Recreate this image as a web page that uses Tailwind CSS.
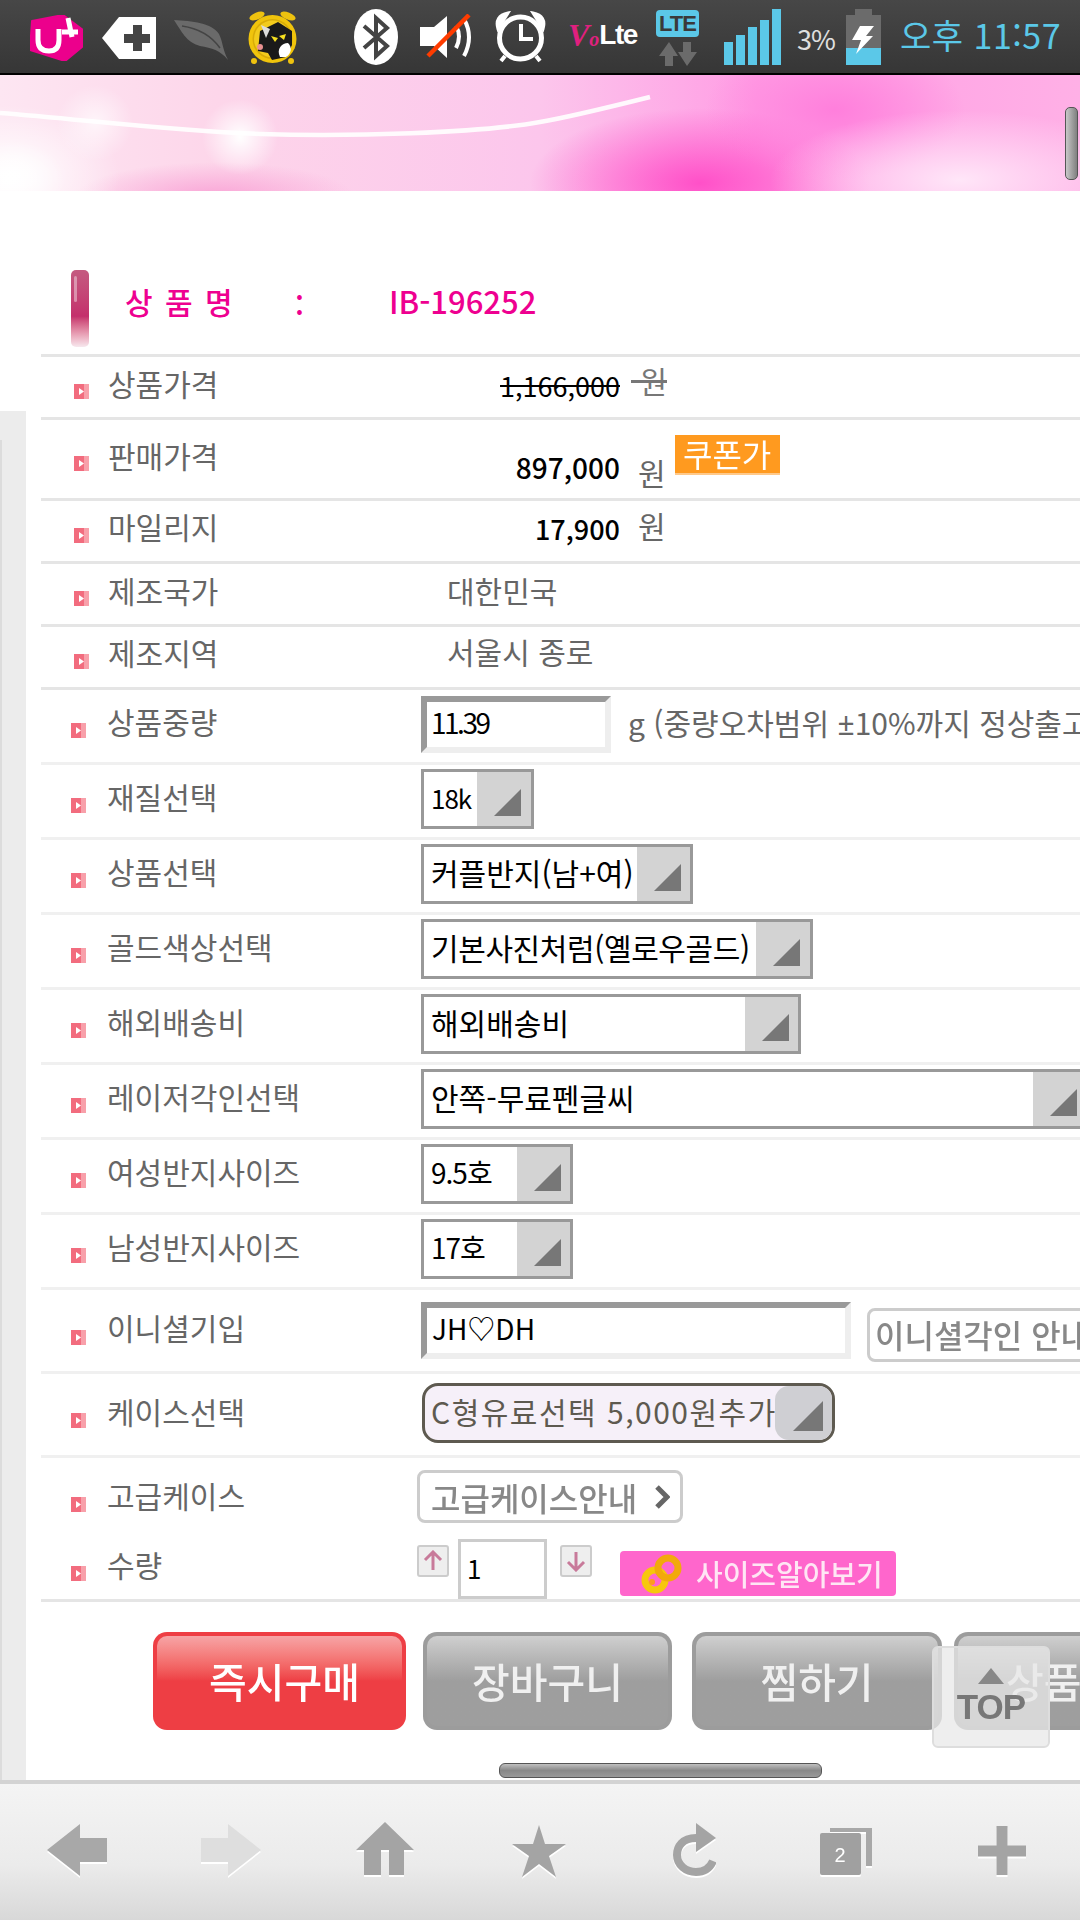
<!DOCTYPE html>
<html lang="ko">
<head>
    <meta charset="UTF-8">
    <meta name="viewport" content="width=device-width, initial-scale=1.0">
    <title>상품 상세</title>
    <script src="https://cdn.jsdelivr.net/npm/@tailwindcss/browser@4"></script>
</head>
<body class="bg-white">
<div class="relative flex flex-col w-[1080px] h-[1920px] overflow-hidden bg-white font-['Noto_Sans_CJK_KR','Noto_Sans',sans-serif]">

    <!-- status bar -->
    <div class="flex items-start shrink-0 h-[75px] border-b-2 border-black bg-linear-to-b from-[#474747] to-[#363636]">
        <svg class="ml-[30px] mt-[15px] shrink-0" width="53" height="46" viewBox="0 0 53 46">
            <path d="M2 6 L33 0 L53 15 L52 32 L35 46 L0 35 Z" fill="#ec008c" stroke="#ec008c" stroke-width="2" stroke-linejoin="round"/>
            <path d="M8 14 V25 Q8 36 19 36 Q29 36 29 25 V14 M38 3 L42 22 M32 17 H48" fill="none" stroke="#fff" stroke-width="5"/>
        </svg>
        <svg class="ml-[19px] mt-[17px] shrink-0" width="54" height="42" viewBox="0 0 54 42">
            <path d="M0 21 L17 0 H54 V42 H17 Z" fill="#fff"/>
            <path d="M31 8 H40 V17 H48 V26 H40 V34 H31 V26 H22 V17 H31 Z" fill="#444"/>
        </svg>
        <svg class="ml-[18px] mt-[20px] shrink-0" width="54" height="40" viewBox="0 0 54 40">
            <path d="M0 0 C18 1 38 3 45 14 C49 22 48 28 54 40 C46 30 38 28 26 26 C12 22 8 12 0 0 Z" fill="#6a6a6a"/>
            <path d="M8 6 C22 8 36 14 46 28" fill="none" stroke="#444" stroke-width="1.5"/>
        </svg>
        <svg class="ml-[20px] mt-[11px] shrink-0" width="49" height="54" viewBox="0 0 49 54">
            <ellipse cx="9" cy="5" rx="8" ry="3.5" transform="rotate(-22 9 5)" fill="#eec20f"/>
            <ellipse cx="40" cy="5" rx="8" ry="3.5" transform="rotate(22 40 5)" fill="#eec20f"/>
            <circle cx="6" cy="50" r="3" fill="#eec20f"/>
            <circle cx="43" cy="50" r="3" fill="#eec20f"/>
            <circle cx="24.5" cy="28" r="24" fill="#f0c40c"/>
            <circle cx="24.5" cy="28" r="20" fill="#d8ac08"/>
            <circle cx="24.5" cy="28" r="18.5" fill="#f2cb1c"/>
            <path d="M12 20 L30 11 L44 20 L44 34 L38 46 L24 49 L20 42 L10 40 Z" fill="#1a1a1a"/>
            <path d="M13 14 L22 18 L18 27 Z" fill="#ddd"/>
            <path d="M23 25 L30 27 L27 31 Z M31 25 L38 23 L36 29 Z" fill="#f6e020"/>
            <path d="M32 46 C28 38 34 32 40 32 C44 36 44 42 38 46 Z" fill="#fff"/>
            <circle cx="12" cy="36" r="3" fill="#e89090"/>
        </svg>
        <svg class="ml-[57px] mt-[9px] shrink-0" width="44" height="56" viewBox="0 0 44 56">
            <ellipse cx="22" cy="28" rx="22" ry="28" fill="#fff"/>
            <path d="M10 17 L33 37 L22 47 V9 L33 19 L10 39" fill="none" stroke="#444" stroke-width="4"/>
        </svg>
        <svg class="ml-[22px] mt-[14px] shrink-0" width="55" height="46" viewBox="0 0 55 46">
            <path d="M0 13 H14 L27 2 V44 L14 32 H0 Z" fill="#fff"/>
            <path d="M36 12 Q42 22 36 34 M44 5 Q54 23 44 42" fill="none" stroke="#fff" stroke-width="4"/>
            <path d="M8 42 L49 1" stroke="#ff3c00" stroke-width="4.5"/>
        </svg>
        <svg class="ml-[18px] mt-[11px] shrink-0" width="55" height="52" viewBox="0 0 55 52">
            <circle cx="27.5" cy="27" r="21" fill="none" stroke="#fff" stroke-width="5"/>
            <path d="M5 18 Q1 5 15 2 Q10 10 5 18 Z M50 18 Q54 5 40 2 Q45 10 50 18 Z" fill="#fff" stroke="#fff" stroke-width="3"/>
            <path d="M28 13 V28 H40" fill="none" stroke="#fff" stroke-width="4"/>
            <path d="M12 45 L8 50 M43 45 L47 50" stroke="#fff" stroke-width="4"/>
        </svg>
        <div class="ml-[20px] mt-[13px] w-[69px] flex items-center shrink-0 h-[44px] whitespace-nowrap">
            <span class="font-['Liberation_Serif',serif] italic font-bold text-[#e0207f] text-[32px] leading-none">V<span class="text-[20px]">o</span></span>
            <span class="font-['Liberation_Sans',sans-serif] font-bold text-white text-[28px] tracking-[-1.5px] leading-none">Lte</span>
        </div>
        <div class="ml-[19px] mt-[10px] w-[43px] shrink-0 flex flex-col items-center">
            <span class="w-[43px] h-[27px] rounded-[4px] bg-[#5bc8e8] text-[#3a3a3a] font-['Liberation_Sans',sans-serif] font-bold text-[22px] leading-[27px] text-center tracking-[-1px]">LTE</span>
            <svg class="mt-[5px]" width="38" height="24" viewBox="0 0 38 24">
                <path d="M0 14 L10 0 L19 14 H14 V24 H6 V14 Z M19 10 H24 V0 H32 V10 H38 L28 24 Z" fill="#6b6b6b"/>
            </svg>
        </div>
        <div class="ml-[25px] mt-[9px] h-[56px] flex items-end gap-[3px] shrink-0">
            <span class="w-[9px] h-[23px] bg-[#5bc8e8]"></span>
            <span class="w-[9px] h-[30px] bg-[#5bc8e8]"></span>
            <span class="w-[9px] h-[38px] bg-[#5bc8e8]"></span>
            <span class="w-[9px] h-[45px] bg-[#5bc8e8]"></span>
            <span class="w-[9px] h-[56px] bg-[#5bc8e8]"></span>
        </div>
        <span class="ml-[16px] mt-[19px] w-[36px] shrink-0 text-[#e0e0e0] text-[27px] leading-[40px] tracking-[-1px] whitespace-nowrap">3%</span>
        <div class="relative ml-[13px] mt-[9px] w-[35px] h-[56px] shrink-0 flex flex-col items-center">
            <span class="w-[17px] h-[6px] bg-[#6b6b6b]"></span>
            <span class="w-[35px] h-[33px] bg-[#6b6b6b]"></span>
            <span class="w-[35px] h-[17px] bg-[#5bc8e8]"></span>
            <svg class="absolute left-[6px] top-[17px]" width="22" height="28" viewBox="0 0 22 28">
                <path d="M8 0 H22 L14 10 H21 L4 28 L9 14 H0 Z" fill="#fff"/>
            </svg>
        </div>
        <span class="ml-[19px] mt-[10px] shrink-0 text-[#5bc8e8] text-[34px] tracking-[0.5px] leading-[50px] whitespace-nowrap">오후 11:57</span>
    </div>

    <!-- banner -->
    <svg class="block shrink-0" width="1080" height="116" viewBox="0 0 1080 116">
        <defs>
            <linearGradient id="base" x1="0" y1="0" x2="1" y2="0">
                <stop offset="0" stop-color="#fde6f2"/>
                <stop offset="0.2" stop-color="#fdd6ea"/>
                <stop offset="0.5" stop-color="#fcc6ec"/>
                <stop offset="0.7" stop-color="#ff9de4"/>
                <stop offset="1" stop-color="#ffb0e6"/>
            </linearGradient>
            <radialGradient id="hot"><stop offset="0" stop-color="#ff50c8"/><stop offset="1" stop-color="#ff50c8" stop-opacity="0"/></radialGradient>
            <radialGradient id="mid"><stop offset="0" stop-color="#ff7fdc"/><stop offset="1" stop-color="#ff7fdc" stop-opacity="0"/></radialGradient>
            <radialGradient id="soft"><stop offset="0" stop-color="#f9a4d6"/><stop offset="1" stop-color="#f9a4d6" stop-opacity="0"/></radialGradient>
            <radialGradient id="glow"><stop offset="0" stop-color="#fff"/><stop offset="1" stop-color="#fff" stop-opacity="0"/></radialGradient>
            <radialGradient id="pale"><stop offset="0" stop-color="#ffe6f8"/><stop offset="1" stop-color="#ffe6f8" stop-opacity="0"/></radialGradient>
        </defs>
        <rect width="1080" height="116" fill="url(#base)"/>
        <ellipse cx="700" cy="108" rx="170" ry="75" fill="url(#hot)"/>
        <ellipse cx="835" cy="35" rx="130" ry="70" fill="url(#mid)"/>
        <ellipse cx="215" cy="122" rx="140" ry="35" fill="url(#soft)"/>
        <ellipse cx="960" cy="105" rx="190" ry="70" fill="url(#pale)"/>
        <ellipse cx="10" cy="100" rx="110" ry="70" fill="url(#glow)"/>
        <ellipse cx="10" cy="105" rx="55" ry="40" fill="url(#glow)"/>
        <circle cx="240" cy="62" r="38" fill="url(#glow)"/>
        <circle cx="95" cy="48" r="38" fill="url(#glow)" opacity="0.7"/>
        <path d="M0 38 C80 44 170 56 260 59 C350 62 480 58 540 47 C570 42 610 32 650 22" fill="none" stroke="#fff" stroke-width="4.5" opacity="0.9"/>
    </svg>

    <!-- page body -->
    <div class="flex flex-1 min-h-0 overflow-hidden">
        <div class="w-[26px] shrink-0 pt-[220px] flex flex-col">
            <div class="flex-1 bg-[#ececec] pt-[29px]">
                <div class="h-full w-[2px] bg-[#dcdcdc]"></div>
            </div>
        </div>

        <div class="flex-1 min-w-0 pl-[15px] overflow-hidden whitespace-nowrap">
            <!-- product name -->
            <div class="flex items-start h-[166px] border-b-[3px] border-[#e5e5e5]">
                <div class="ml-[30px] mt-[79px] w-[18px] h-[77px] shrink-0 pl-[3px] pt-[6px] rounded-[5px] bg-linear-to-b from-[#c45a80] via-[#c42f6c] via-[60%] to-[#f6e8ee]">
                    <div class="w-[3px] h-[26px] rounded-[2px] bg-white/40"></div>
                </div>
                <span class="ml-[36px] mt-[90px] w-[170px] shrink-0 text-[#ee0090] text-[30px] leading-[40px] font-medium tracking-[2px]">상 품 명</span>
                <span class="mt-[93px] w-[94px] shrink-0 text-[#ee0090] text-[30px] leading-[40px] font-medium">:</span>
                <span class="mt-[90px] text-[#ee0090] text-[31px] leading-[40px] font-medium">IB-196252</span>
            </div>

            <!-- 상품가격 -->
            <div class="flex items-start h-[63px] border-b-[3px] border-[#e5e5e5]">
                <svg class="ml-[33px] mt-[27px] shrink-0" width="15" height="15" viewBox="0 0 15 15"><rect width="10" height="15" fill="#f26c7e"/><rect x="10" width="5" height="15" fill="#f8a0aa"/><path d="M5 4 L10 7.5 L5 11 Z" fill="#fff"/></svg>
                <span class="ml-[19px] mt-[6px] w-[313px] shrink-0 text-[#666] text-[30px] leading-[40px]">상품가격</span>
                <span class="mt-[9px] w-[199px] shrink-0 text-right text-black text-[27px] leading-[40px] line-through">1,166,000</span>
                <span class="ml-[11px] mt-[3px] text-[#777] text-[30px] leading-[40px] line-through">&nbsp;원</span>
            </div>

            <!-- 판매가격 -->
            <div class="flex items-start h-[81px] border-b-[3px] border-[#e5e5e5]">
                <svg class="ml-[33px] mt-[36px] shrink-0" width="15" height="15" viewBox="0 0 15 15"><rect width="10" height="15" fill="#f26c7e"/><rect x="10" width="5" height="15" fill="#f8a0aa"/><path d="M5 4 L10 7.5 L5 11 Z" fill="#fff"/></svg>
                <span class="ml-[19px] mt-[15px] w-[313px] shrink-0 text-[#666] text-[30px] leading-[40px]">판매가격</span>
                <span class="mt-[27px] w-[199px] shrink-0 text-right text-black text-[28px] leading-[40px] font-medium">897,000</span>
                <span class="ml-[18px] mt-[32px] text-[#666] text-[30px] leading-[40px]">원</span>
                <span class="ml-[9px] mt-[15px] w-[105px] h-[40px] shrink-0 bg-[#ff9a1f] border-b-2 border-[#ffc98a] text-white text-center text-[32px] leading-[36px] blur-[0.4px]">쿠폰가</span>
            </div>

            <!-- 마일리지 -->
            <div class="flex items-start h-[63px] border-b-[3px] border-[#e5e5e5]">
                <svg class="ml-[33px] mt-[27px] shrink-0" width="15" height="15" viewBox="0 0 15 15"><rect width="10" height="15" fill="#f26c7e"/><rect x="10" width="5" height="15" fill="#f8a0aa"/><path d="M5 4 L10 7.5 L5 11 Z" fill="#fff"/></svg>
                <span class="ml-[19px] mt-[5px] w-[313px] shrink-0 text-[#666] text-[30px] leading-[40px]">마일리지</span>
                <span class="mt-[8px] w-[199px] shrink-0 text-right text-black text-[27px] leading-[40px] font-medium">17,900</span>
                <span class="ml-[18px] mt-[4px] text-[#666] text-[30px] leading-[40px]">원</span>
            </div>

            <!-- 제조국가 -->
            <div class="flex items-start h-[63px] border-b-[3px] border-[#e5e5e5]">
                <svg class="ml-[33px] mt-[27px] shrink-0" width="15" height="15" viewBox="0 0 15 15"><rect width="10" height="15" fill="#f26c7e"/><rect x="10" width="5" height="15" fill="#f8a0aa"/><path d="M5 4 L10 7.5 L5 11 Z" fill="#fff"/></svg>
                <span class="ml-[19px] mt-[6px] w-[313px] shrink-0 text-[#666] text-[30px] leading-[40px]">제조국가</span>
                <span class="ml-[26px] mt-[6px] text-[#666] text-[30px] leading-[40px]">대한민국</span>
            </div>

            <!-- 제조지역 -->
            <div class="flex items-start h-[63px] border-b-[3px] border-[#e5e5e5]">
                <svg class="ml-[33px] mt-[27px] shrink-0" width="15" height="15" viewBox="0 0 15 15"><rect width="10" height="15" fill="#f26c7e"/><rect x="10" width="5" height="15" fill="#f8a0aa"/><path d="M5 4 L10 7.5 L5 11 Z" fill="#fff"/></svg>
                <span class="ml-[19px] mt-[5px] w-[313px] shrink-0 text-[#666] text-[30px] leading-[40px]">제조지역</span>
                <span class="ml-[26px] mt-[4px] text-[#666] text-[30px] leading-[40px]">서울시 종로</span>
            </div>

            <!-- 상품중량 -->
            <div class="flex items-start h-[75px] border-b-[3px] border-[#f0f0f0]">
                <svg class="ml-[30px] mt-[33px] shrink-0" width="15" height="15" viewBox="0 0 15 15"><rect width="10" height="15" fill="#f26c7e"/><rect x="10" width="5" height="15" fill="#f8a0aa"/><path d="M5 4 L10 7.5 L5 11 Z" fill="#fff"/></svg>
                <span class="ml-[21px] mt-[11px] w-[314px] shrink-0 text-[#666] text-[30px] leading-[40px]">상품중량</span>
                <div class="mt-[6px] w-[190px] h-[57px] shrink-0 border-[6px] border-t-[#999] border-l-[#999] border-r-[#eee] border-b-[#eee] pl-[4px] text-black text-[28px] tracking-[-2.5px] leading-[40px]">11.39</div>
                <span class="ml-[17px] mt-[12px] text-[#666] text-[30px] leading-[40px]">g (중량오차범위 <span class="font-['Noto_Sans',sans-serif]">±</span>10%까지 정상출고</span>
            </div>

            <!-- 재질선택 -->
            <div class="flex items-start h-[75px] border-b-[3px] border-[#f0f0f0]">
                <svg class="ml-[30px] mt-[33px] shrink-0" width="15" height="15" viewBox="0 0 15 15"><rect width="10" height="15" fill="#f26c7e"/><rect x="10" width="5" height="15" fill="#f8a0aa"/><path d="M5 4 L10 7.5 L5 11 Z" fill="#fff"/></svg>
                <span class="ml-[21px] mt-[11px] w-[314px] shrink-0 text-[#666] text-[30px] leading-[40px]">재질선택</span>
                <div class="flex mt-[4px] w-[113px] h-[60px] shrink-0 border-[3px] border-[#999] bg-white">
                    <span class="flex-1 min-w-0 pl-[7px] text-black text-[26px] tracking-[-1px] leading-[52px]">18k</span>
                    <span class="flex items-end w-[54px] h-full pl-[17px] pb-[10px] bg-[#d3d3d3]"><svg width="27" height="27" viewBox="0 0 27 27"><path d="M27 0 V27 H0 Z" fill="#777"/></svg></span>
                </div>
            </div>

            <!-- 상품선택 -->
            <div class="flex items-start h-[75px] border-b-[3px] border-[#f0f0f0]">
                <svg class="ml-[30px] mt-[33px] shrink-0" width="15" height="15" viewBox="0 0 15 15"><rect width="10" height="15" fill="#f26c7e"/><rect x="10" width="5" height="15" fill="#f8a0aa"/><path d="M5 4 L10 7.5 L5 11 Z" fill="#fff"/></svg>
                <span class="ml-[21px] mt-[11px] w-[314px] shrink-0 text-[#666] text-[30px] leading-[40px]">상품선택</span>
                <div class="flex mt-[4px] w-[272px] h-[60px] shrink-0 border-[3px] border-[#999] bg-white">
                    <span class="flex-1 min-w-0 pl-[7px] text-black text-[30px] leading-[50px]">커플반지(남+여)</span>
                    <span class="flex items-end w-[53px] h-full pl-[17px] pb-[10px] bg-[#d3d3d3]"><svg width="27" height="27" viewBox="0 0 27 27"><path d="M27 0 V27 H0 Z" fill="#777"/></svg></span>
                </div>
            </div>

            <!-- 골드색상선택 -->
            <div class="flex items-start h-[75px] border-b-[3px] border-[#f0f0f0]">
                <svg class="ml-[30px] mt-[33px] shrink-0" width="15" height="15" viewBox="0 0 15 15"><rect width="10" height="15" fill="#f26c7e"/><rect x="10" width="5" height="15" fill="#f8a0aa"/><path d="M5 4 L10 7.5 L5 11 Z" fill="#fff"/></svg>
                <span class="ml-[21px] mt-[11px] w-[314px] shrink-0 text-[#666] text-[30px] leading-[40px]">골드색상선택</span>
                <div class="flex mt-[4px] w-[392px] h-[60px] shrink-0 border-[3px] border-[#999] bg-white">
                    <span class="flex-1 min-w-0 pl-[7px] text-black text-[30px] tracking-[-0.4px] leading-[50px]">기본사진처럼(옐로우골드)</span>
                    <span class="flex items-end w-[54px] h-full pl-[17px] pb-[10px] bg-[#d3d3d3]"><svg width="27" height="27" viewBox="0 0 27 27"><path d="M27 0 V27 H0 Z" fill="#777"/></svg></span>
                </div>
            </div>

            <!-- 해외배송비 -->
            <div class="flex items-start h-[75px] border-b-[3px] border-[#f0f0f0]">
                <svg class="ml-[30px] mt-[33px] shrink-0" width="15" height="15" viewBox="0 0 15 15"><rect width="10" height="15" fill="#f26c7e"/><rect x="10" width="5" height="15" fill="#f8a0aa"/><path d="M5 4 L10 7.5 L5 11 Z" fill="#fff"/></svg>
                <span class="ml-[21px] mt-[11px] w-[314px] shrink-0 text-[#666] text-[30px] leading-[40px]">해외배송비</span>
                <div class="flex mt-[4px] w-[380px] h-[60px] shrink-0 border-[3px] border-[#999] bg-white">
                    <span class="flex-1 min-w-0 pl-[7px] text-black text-[30px] leading-[50px]">해외배송비</span>
                    <span class="flex items-end w-[53px] h-full pl-[17px] pb-[10px] bg-[#d3d3d3]"><svg width="27" height="27" viewBox="0 0 27 27"><path d="M27 0 V27 H0 Z" fill="#777"/></svg></span>
                </div>
            </div>

            <!-- 레이저각인선택 -->
            <div class="flex items-start h-[75px] border-b-[3px] border-[#f0f0f0]">
                <svg class="ml-[30px] mt-[33px] shrink-0" width="15" height="15" viewBox="0 0 15 15"><rect width="10" height="15" fill="#f26c7e"/><rect x="10" width="5" height="15" fill="#f8a0aa"/><path d="M5 4 L10 7.5 L5 11 Z" fill="#fff"/></svg>
                <span class="ml-[21px] mt-[11px] w-[314px] shrink-0 text-[#666] text-[30px] leading-[40px]">레이저각인선택</span>
                <div class="flex mt-[4px] w-[674px] h-[60px] shrink-0 border-[3px] border-[#999] bg-white">
                    <span class="flex-1 min-w-0 pl-[7px] text-black text-[30px] leading-[50px]">안쪽-무료펜글씨</span>
                    <span class="flex items-end w-[59px] h-full pl-[17px] pb-[10px] bg-[#d3d3d3]"><svg width="27" height="27" viewBox="0 0 27 27"><path d="M27 0 V27 H0 Z" fill="#777"/></svg></span>
                </div>
            </div>

            <!-- 여성반지사이즈 -->
            <div class="flex items-start h-[75px] border-b-[3px] border-[#f0f0f0]">
                <svg class="ml-[30px] mt-[33px] shrink-0" width="15" height="15" viewBox="0 0 15 15"><rect width="10" height="15" fill="#f26c7e"/><rect x="10" width="5" height="15" fill="#f8a0aa"/><path d="M5 4 L10 7.5 L5 11 Z" fill="#fff"/></svg>
                <span class="ml-[21px] mt-[11px] w-[314px] shrink-0 text-[#666] text-[30px] leading-[40px]">여성반지사이즈</span>
                <div class="flex mt-[4px] w-[152px] h-[60px] shrink-0 border-[3px] border-[#999] bg-white">
                    <span class="flex-1 min-w-0 pl-[7px] text-black text-[28px] tracking-[-1px] leading-[50px]">9.5호</span>
                    <span class="flex items-end w-[53px] h-full pl-[17px] pb-[10px] bg-[#d3d3d3]"><svg width="27" height="27" viewBox="0 0 27 27"><path d="M27 0 V27 H0 Z" fill="#777"/></svg></span>
                </div>
            </div>

            <!-- 남성반지사이즈 -->
            <div class="flex items-start h-[75px] border-b-[3px] border-[#f0f0f0]">
                <svg class="ml-[30px] mt-[33px] shrink-0" width="15" height="15" viewBox="0 0 15 15"><rect width="10" height="15" fill="#f26c7e"/><rect x="10" width="5" height="15" fill="#f8a0aa"/><path d="M5 4 L10 7.5 L5 11 Z" fill="#fff"/></svg>
                <span class="ml-[21px] mt-[11px] w-[314px] shrink-0 text-[#666] text-[30px] leading-[40px]">남성반지사이즈</span>
                <div class="flex mt-[4px] w-[152px] h-[60px] shrink-0 border-[3px] border-[#999] bg-white">
                    <span class="flex-1 min-w-0 pl-[7px] text-black text-[28px] tracking-[-1px] leading-[50px]">17호</span>
                    <span class="flex items-end w-[53px] h-full pl-[17px] pb-[10px] bg-[#d3d3d3]"><svg width="27" height="27" viewBox="0 0 27 27"><path d="M27 0 V27 H0 Z" fill="#777"/></svg></span>
                </div>
            </div>

            <!-- 이니셜기입 -->
            <div class="flex items-start h-[84px] border-b-[3px] border-[#f0f0f0]">
                <svg class="ml-[30px] mt-[40px] shrink-0" width="15" height="15" viewBox="0 0 15 15"><rect width="10" height="15" fill="#f26c7e"/><rect x="10" width="5" height="15" fill="#f8a0aa"/><path d="M5 4 L10 7.5 L5 11 Z" fill="#fff"/></svg>
                <span class="ml-[21px] mt-[17px] w-[314px] shrink-0 text-[#666] text-[30px] leading-[40px]">이니셜기입</span>
                <div class="mt-[12px] w-[430px] h-[57px] shrink-0 border-[6px] border-t-[#999] border-l-[#999] border-r-[#eee] border-b-[#eee] pl-[5px] text-black text-[28px] leading-[40px]">JH♡DH</div>
                <div class="ml-[16px] mt-[18px] w-[260px] h-[54px] shrink-0 pl-[5px] border-[3px] border-[#ccc] rounded-[8px] text-[#888] font-medium text-[32px] leading-[46px] blur-[0.5px]">이니셜각인 안내</div>
            </div>

            <!-- 케이스선택 -->
            <div class="flex items-start h-[84px] border-b-[3px] border-[#f0f0f0]">
                <svg class="ml-[30px] mt-[39px] shrink-0" width="15" height="15" viewBox="0 0 15 15"><rect width="10" height="15" fill="#f26c7e"/><rect x="10" width="5" height="15" fill="#f8a0aa"/><path d="M5 4 L10 7.5 L5 11 Z" fill="#fff"/></svg>
                <span class="ml-[21px] mt-[17px] w-[315px] shrink-0 text-[#666] text-[30px] leading-[40px]">케이스선택</span>
                <div class="flex mt-[9px] w-[413px] h-[60px] shrink-0 overflow-hidden border-[3px] border-[#5e5a50] rounded-[16px] bg-[#f6f0f9]">
                    <span class="flex-1 min-w-0 pl-[6px] text-[#5e5a50] text-[30px] tracking-[1.5px] leading-[50px]">C형유료선택 5,000원추가</span>
                    <span class="flex items-end w-[57px] h-full pl-[18px] pb-[9px] rounded-l-[14px] bg-[#cfcfd3]"><svg width="30" height="30" viewBox="0 0 30 30"><path d="M30 0 V30 H0 Z" fill="#777"/></svg></span>
                </div>
            </div>

            <!-- 고급케이스 -->
            <div class="flex items-start h-[81px]">
                <svg class="ml-[30px] mt-[39px] shrink-0" width="15" height="15" viewBox="0 0 15 15"><rect width="10" height="15" fill="#f26c7e"/><rect x="10" width="5" height="15" fill="#f8a0aa"/><path d="M5 4 L10 7.5 L5 11 Z" fill="#fff"/></svg>
                <span class="ml-[21px] mt-[17px] w-[310px] shrink-0 text-[#666] text-[30px] leading-[40px]">고급케이스</span>
                <div class="flex items-center mt-[12px] w-[266px] h-[53px] shrink-0 pl-[11px] border-[3px] border-[#ccc] rounded-[8px] bg-white">
                    <span class="text-[#888] font-medium text-[32px] leading-[46px] blur-[0.5px]">고급케이스안내</span>
                    <svg class="ml-[18px] blur-[0.5px]" width="15" height="24" viewBox="0 0 15 24"><path d="M2 2 L12 12 L2 22" fill="none" stroke="#666" stroke-width="5"/></svg>
                </div>
            </div>

            <!-- 수량 -->
            <div class="flex items-start h-[63px] border-b-[3px] border-[#e5e5e5]">
                <svg class="ml-[30px] mt-[27px] shrink-0" width="15" height="15" viewBox="0 0 15 15"><rect width="10" height="15" fill="#f26c7e"/><rect x="10" width="5" height="15" fill="#f8a0aa"/><path d="M5 4 L10 7.5 L5 11 Z" fill="#fff"/></svg>
                <span class="ml-[21px] mt-[5px] w-[310px] shrink-0 text-[#666] text-[30px] leading-[40px]">수량</span>
                <div class="flex items-center justify-center mt-[6px] w-[32px] h-[32px] shrink-0 rounded-[3px] border-2 border-[#ccc] bg-[#eee]">
                    <svg width="20" height="22" viewBox="0 0 20 22"><path d="M10 2 V20 M2 10 L10 2 L18 10" fill="none" stroke="#c87a9a" stroke-width="3"/></svg>
                </div>
                <div class="ml-[9px] w-[89px] h-[60px] shrink-0 pl-[6px] border-[3px] border-[#ccc] text-black text-[26px] leading-[52px]">1</div>
                <div class="flex items-center justify-center ml-[13px] mt-[6px] w-[32px] h-[32px] shrink-0 rounded-[3px] border-2 border-[#ccc] bg-[#eee]">
                    <svg width="20" height="22" viewBox="0 0 20 22"><path d="M10 2 V20 M2 12 L10 20 L18 12" fill="none" stroke="#c87a9a" stroke-width="3"/></svg>
                </div>
                <div class="flex items-center ml-[28px] mt-[12px] w-[276px] h-[45px] shrink-0 pl-[20px] rounded-[4px] bg-[#ff66cc]">
                    <svg width="46" height="40" viewBox="0 0 46 40">
                        <circle cx="15" cy="26" r="10" fill="none" stroke="#f7c70c" stroke-width="7"/>
                        <circle cx="28" cy="14" r="10" fill="none" stroke="#f2a90c" stroke-width="7"/>
                        <circle cx="12" cy="28" r="3" fill="#ff9a1f"/>
                    </svg>
                    <span class="ml-[10px] text-[#ffe6f4] font-medium text-[29px] leading-[45px] blur-[0.4px]">사이즈알아보기</span>
                </div>
            </div>

            <!-- action buttons -->
            <div class="flex items-start mt-[30px] pl-[112px]">
                <div class="w-[253px] h-[98px] shrink-0 p-[4px] rounded-[14px] bg-[#ee3e44]">
                    <div class="flex items-center justify-center h-full pl-[10px] rounded-[10px] bg-linear-to-b from-[#f6a4a6] to-[#ee3e44] to-[50%] text-white font-medium text-[41px] blur-[0.6px]">즉시구매</div>
                </div>
                <div class="ml-[17px] w-[249px] h-[98px] shrink-0 p-[4px] rounded-[14px] bg-[#9c9c9c]">
                    <div class="flex items-center justify-center h-full rounded-[10px] bg-linear-to-b from-[#cfcfcf] to-[#9e9e9e] to-[50%] text-[#f0f0f0] font-medium text-[41px] blur-[0.6px]">장바구니</div>
                </div>
                <div class="ml-[20px] w-[250px] h-[98px] shrink-0 p-[4px] rounded-[14px] bg-[#9c9c9c]">
                    <div class="flex items-center justify-center h-full rounded-[10px] bg-linear-to-b from-[#cfcfcf] to-[#9e9e9e] to-[50%] text-[#f0f0f0] font-medium text-[41px] blur-[0.6px]">찜하기</div>
                </div>
                <div class="ml-[12px] w-[250px] h-[98px] shrink-0 p-[4px] rounded-[14px] bg-[#9c9c9c]">
                    <div class="flex items-center h-full pl-[48px] rounded-[10px] bg-linear-to-b from-[#cfcfcf] to-[#9e9e9e] to-[50%] text-[#f0f0f0] font-medium text-[41px] blur-[0.6px]">상품</div>
                </div>
            </div>
        </div>
    </div>

    <!-- browser toolbar -->
    <div class="flex items-start shrink-0 h-[140px] border-t-4 border-[#d3d3d3] bg-linear-to-b from-[#f4f4f4] via-[#ebebeb] via-[60%] to-[#d8d8d8]">
        <svg class="ml-[47px] mt-[40px] shrink-0 drop-shadow-[0_2px_0_#fff]" width="60" height="52" viewBox="0 0 60 52"><path d="M0 26 L33 0 V14 H60 V38 H33 V52 Z" fill="#a8a8a8"/></svg>
        <svg class="ml-[94px] mt-[40px] shrink-0 drop-shadow-[0_2px_0_#fff]" width="60" height="52" viewBox="0 0 60 52"><path d="M60 26 L27 0 V14 H0 V38 H27 V52 Z" fill="#dedede"/></svg>
        <svg class="ml-[95px] mt-[38px] shrink-0 drop-shadow-[0_2px_0_#fff]" width="58" height="53" viewBox="0 0 58 53"><path d="M29 0 L58 28 H48 V53 H33 V28 H25 V53 H8 V28 H0 Z" fill="#a4a4a4"/></svg>
        <svg class="ml-[98px] mt-[41px] shrink-0 drop-shadow-[0_2px_0_#fff]" width="54" height="52" viewBox="0 0 54 52"><path d="M27 0 L33 19 L54 19 L37 31 L44 52 L27 39 L10 52 L17 31 L0 19 L21 19 Z" fill="#a4a4a4"/></svg>
        <svg class="ml-[106px] mt-[39px] shrink-0 drop-shadow-[0_2px_0_#fff]" width="44" height="54" viewBox="0 0 44 54"><path d="M24 15 C10 15 5 24 5 32 C5 42 14 49 24 49 C32 49 38 45 41 38" fill="none" stroke="#a4a4a4" stroke-width="8"/><path d="M24 0 L44 15 L24 29 Z" fill="#a4a4a4"/></svg>
        <svg class="ml-[104px] mt-[40px] shrink-0 drop-shadow-[0_2px_0_#fff]" width="52" height="51" viewBox="0 0 52 51">
            <path d="M10 4 H52 V42 H46 V8 H10 Z" fill="#a8a8a8"/>
            <rect y="9" width="41" height="42" rx="2" fill="#a0a0a0"/>
            <text x="20" y="38" text-anchor="middle" font-size="20" fill="#fff" font-family="Liberation Sans, sans-serif">2</text>
        </svg>
        <svg class="ml-[106px] mt-[42px] shrink-0 drop-shadow-[0_2px_0_#fff]" width="48" height="49" viewBox="0 0 48 49"><path d="M19 0 H29 V20 H48 V30 H29 V49 H19 V30 H0 V20 H19 Z" fill="#a4a4a4" stroke="#a4a4a4" stroke-width="1" stroke-linejoin="round"/></svg>
    </div>

    <!-- overlays -->
    <div class="absolute left-[1065px] top-[107px] w-[13px] h-[73px] rounded-[5px] border border-[#555] bg-linear-to-r from-[#c8c8c8] to-[#808080]"></div>
    <div class="absolute left-[499px] top-[1763px] w-[323px] h-[15px] rounded-[6px] border border-[#555] bg-linear-to-b from-[#c0c0c0] via-[#888] to-[#999]"></div>
    <div class="absolute left-[932px] top-[1646px] flex flex-col items-center w-[118px] h-[102px] pt-[20px] rounded-[6px] border-2 border-[#ddd] bg-[#e8e8e8]/75">
        <svg width="26" height="16" viewBox="0 0 26 16"><path d="M13 0 L26 16 H0 Z" fill="#888"/></svg>
        <span class="mt-[4px] font-['Liberation_Sans',sans-serif] font-bold text-[#777] text-[35px] tracking-[-1px] leading-[38px] blur-[0.4px]">TOP</span>
    </div>
</div>
</body>
</html>
